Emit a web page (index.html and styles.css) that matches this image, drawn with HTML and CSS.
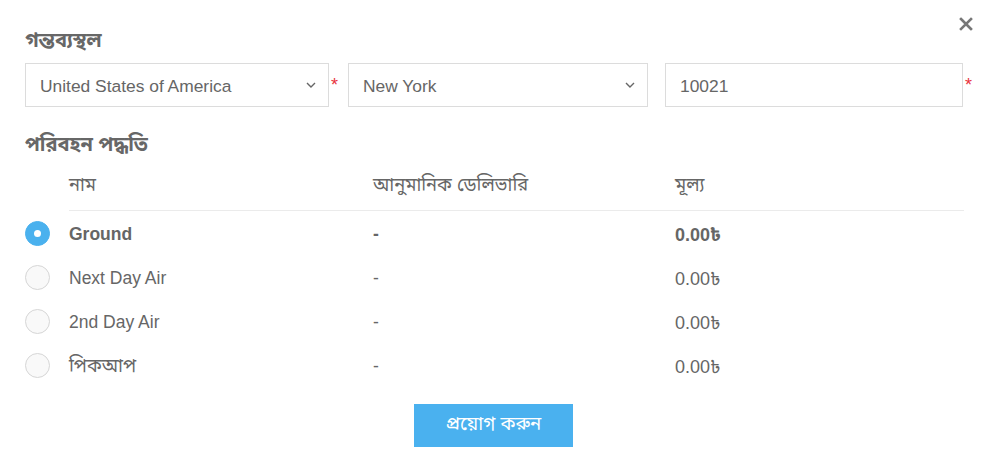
FILE: index.html
```html
<!DOCTYPE html>
<html lang="bn">
<head>
<meta charset="utf-8">
<link rel="stylesheet" href="styles.css">
</head>
<body>
<div class="modal">
  <button class="close" aria-label="close">
    <svg width="14" height="14" viewBox="0 0 14 14"><path d="M2 2 L12 12 M12 2 L2 12" stroke="#777" stroke-width="2.6" stroke-linecap="square"/></svg>
  </button>
  <h3 class="title">গন্তব্যস্থল</h3>
  <div class="fields">
    <div class="field f1">
      <div class="box select"><span>United States of America</span>
        <svg class="chev" width="10" height="6" viewBox="0 0 10 6"><path d="M1 1 L5 5 L9 1" fill="none" stroke="#666" stroke-width="1.4"/></svg>
      </div>
      <span class="req">*</span>
    </div>
    <div class="field f2">
      <div class="box select"><span>New York</span>
        <svg class="chev" width="10" height="6" viewBox="0 0 10 6"><path d="M1 1 L5 5 L9 1" fill="none" stroke="#666" stroke-width="1.4"/></svg>
      </div>
    </div>
    <div class="field f3">
      <div class="box"><span>10021</span></div>
      <span class="req">*</span>
    </div>
  </div>
  <h3 class="title section">পরিবহন পদ্ধতি</h3>
  <div class="table">
    <div class="row head">
      <div class="c0"></div>
      <div class="c c1">নাম</div>
      <div class="c c2">আনুমানিক ডেলিভারি</div>
      <div class="c c3">মূল্য</div>
    </div>
    <div class="row sel">
      <div class="c0"><span class="radio on"></span></div>
      <div class="c c1">Ground</div>
      <div class="c c2">-</div>
      <div class="c c3 price">0.00৳</div>
    </div>
    <div class="row">
      <div class="c0"><span class="radio"></span></div>
      <div class="c c1">Next Day Air</div>
      <div class="c c2">-</div>
      <div class="c c3 price">0.00৳</div>
    </div>
    <div class="row">
      <div class="c0"><span class="radio"></span></div>
      <div class="c c1">2nd Day Air</div>
      <div class="c c2">-</div>
      <div class="c c3 price">0.00৳</div>
    </div>
    <div class="row">
      <div class="c0"><span class="radio"></span></div>
      <div class="c c1 bn">পিকআপ</div>
      <div class="c c2">-</div>
      <div class="c c3 price">0.00৳</div>
    </div>
  </div>
  <div class="actions">
    <button class="apply">প্রয়োগ করুন</button>
  </div>
</div>
</body>
</html>
```
FILE: styles.css
```css
* { box-sizing: border-box; }
html, body { margin: 0; padding: 0; background: #fff; }
body {
  font-family: "Liberation Sans", Arial, "Noto Sans Bengali", "Lohit Bengali", "FreeSans", sans-serif;
  color: #666;
  font-size: 17px;
}
.modal {
  position: relative;
  width: 988px;
  height: 474px;
  padding: 0 24px 0 25px;
}
.close {
  position: absolute;
  top: 17px;
  right: 15px;
  width: 14px;
  height: 14px;
  padding: 0;
  border: 0;
  background: none;
  display: flex;
}
.title {
  margin: 0;
  padding-top: 29px;
  height: 63px;
  line-height: 22px;
  font-size: 20px;
  font-weight: bold;
  color: #676767;
}
.title.section {
  padding-top: 26px;
  height: 47px;
}
.fields {
  display: flex;
  height: 44px;
}
.field { display: flex; flex: none; }
.f1 { width: 323px; }
.f2 { width: 317px; }
.f3 { width: 320px; }
.box {
  height: 44px;
  border: 1px solid #dcdcdc;
  display: flex;
  align-items: center;
  padding: 3px 12px 0 14px;
  font-size: 17.4px;
  color: #666;
  flex: none;
}
.f1 .box { width: 304px; }
.f2 .box { width: 300px; }
.f3 .box { width: 298px; }
.select { justify-content: space-between; padding-top: 0; }
.select span { padding-top: 3px; }
.chev { flex: none; }
.req {
  color: #e8323c;
  font-size: 18px;
  line-height: 1;
  padding: 13px 0 0 2px;
}
.table { width: 939px; }
.row {
  display: flex;
  height: 44px;
  align-items: center;
}
.row.head {
  height: 57px;
  align-items: flex-start;
}
.row.head .c {
  height: 57px;
  padding-top: 20px;
  line-height: 22px;
  font-size: 18.3px;
  border-bottom: 1px solid #ebebeb;
  padding-bottom: 0;
}
.c0 { width: 44px; flex: none; display: flex; align-items: center; }
.c { line-height: 20px; font-size: 17.5px; padding-top: 2px; }
.c1 { width: 304px; flex: none; }
.c2 { width: 302px; flex: none; }
.c3 { flex: 1; }
.bn { font-size: 18.3px; }
.price { font-size: 18px; padding-top: 4px; }
.sel .c { font-weight: bold; }
.radio {
  width: 25px;
  height: 25px;
  border-radius: 50%;
  border: 1px solid #d6d6d6;
  background: #f9f9f9;
  display: block;
  position: relative;
}
.radio.on {
  background: #4ab1ee;
  border-color: #4ab1ee;
}
.radio.on::after {
  content: "";
  position: absolute;
  left: 50%;
  top: 50%;
  width: 7px;
  height: 7px;
  margin: -3.5px 0 0 -3.5px;
  border-radius: 50%;
  background: #fff;
}
.actions {
  display: flex;
  justify-content: center;
  padding-top: 17px;
  padding-right: 2px;
}
.apply {
  width: 159px;
  height: 43px;
  background: #4ab1ef;
  color: #fff;
  border: 0;
  font-family: inherit;
  font-size: 18.6px;
  padding: 0;
}
```
